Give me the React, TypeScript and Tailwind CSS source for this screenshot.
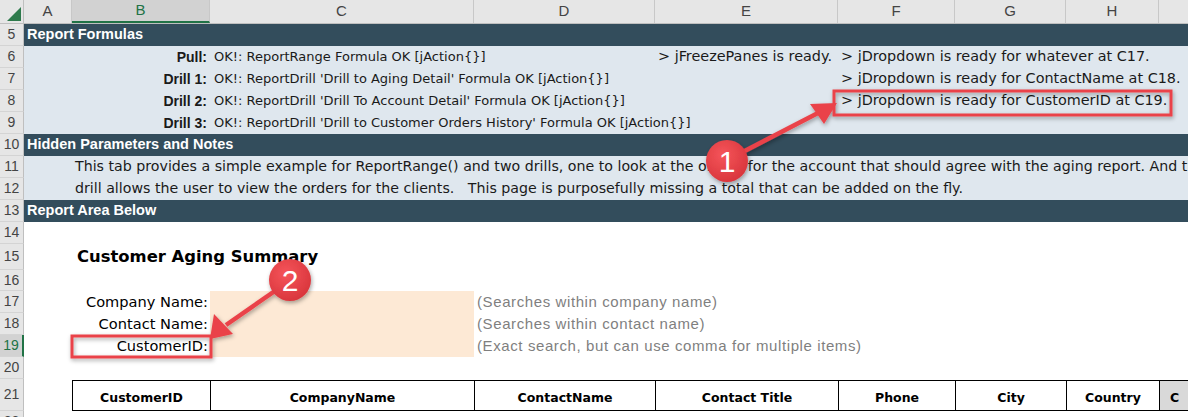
const columns = [
  { key: "A", width: "w-[48px]" },
  { key: "B", width: "w-[138px]", active: true },
  { key: "C", width: "w-[264px]" },
  { key: "D", width: "w-[181px]" },
  { key: "E", width: "w-[183px]" },
  { key: "F", width: "w-[117px]" },
  { key: "G", width: "w-[111px]" },
  { key: "H", width: "w-[93px]" },
];

const formulaRows = [
  {
    n: 6,
    label: "Pull:",
    text: "OK!: ReportRange Formula OK [jAction{}]",
    e: "> jFreezePanes is ready.",
    f: "> jDropdown is ready for whatever at C17.",
  },
  {
    n: 7,
    label: "Drill 1:",
    text: "OK!: ReportDrill 'Drill to Aging Detail' Formula OK [jAction{}]",
    e: "",
    f: "> jDropdown is ready for ContactName at C18.",
  },
  {
    n: 8,
    label: "Drill 2:",
    text: "OK!: ReportDrill 'Drill To Account Detail' Formula OK [jAction{}]",
    e: "",
    f: "> jDropdown is ready for CustomerID at C19.",
  },
  {
    n: 9,
    label: "Drill 3:",
    text: "OK!: ReportDrill 'Drill to Customer Orders History' Formula OK [jAction{}]",
    e: "",
    f: "",
  },
];

const filters = [
  { n: 17, label: "Company Name:", hint: "(Searches within company name)" },
  { n: 18, label: "Contact Name:", hint: "(Searches within contact name)" },
  { n: 19, label: "CustomerID:", hint: "(Exact search, but can use comma for multiple items)", active: true },
];

const tableHead = [
  { label: "CustomerID", width: "w-[138px]" },
  { label: "CompanyName", width: "w-[264px]" },
  { label: "ContactName", width: "w-[181px]" },
  { label: "Contact Title", width: "w-[183px]" },
  { label: "Phone", width: "w-[117px]" },
  { label: "City", width: "w-[111px]" },
  { label: "Country", width: "w-[93px]" },
];

function Row({
  n,
  h,
  band = "",
  active = false,
  children,
}: {
  n: number;
  h: string;
  band?: string;
  active?: boolean;
  children?: React.ReactNode;
}) {
  return (
    <div className={`flex ${h}`}>
      <div
        className={`flex w-[24px] shrink-0 items-center justify-center border-b border-[#d4d4d4] font-['Liberation_Sans',sans-serif] text-[14px] ${
          active
            ? "border-r-2 border-r-[#217346] bg-[#d2d2d2] text-[#217346]"
            : "border-r border-r-[#bfbfbf] bg-[#e6e6e6] text-[#444]"
        }`}
      >
        {n}
      </div>
      <div className={`flex min-w-0 flex-1 items-center whitespace-nowrap ${band}`}>{children}</div>
    </div>
  );
}

function Annotations() {
  return (
    <svg className="pointer-events-none absolute inset-0" width="1188" height="417">
      <defs>
        <filter id="sh" x="-30%" y="-30%" width="160%" height="160%">
          <feDropShadow dx="1" dy="2" stdDeviation="2" floodColor="#000" floodOpacity="0.35" />
        </filter>
        <radialGradient id="dot" cx="40%" cy="35%" r="70%">
          <stop offset="0%" stopColor="#f5555a" />
          <stop offset="100%" stopColor="#d8343b" />
        </radialGradient>
      </defs>
      <g filter="url(#sh)">
        <rect x="834" y="91" width="337" height="24" fill="none" stroke="#ea4349" strokeWidth="3" />
        <rect x="72" y="336" width="139" height="21" fill="none" stroke="#ea4349" strokeWidth="3" />
        <line x1="735" y1="156" x2="818" y2="113" stroke="#ea4349" strokeWidth="4.5" />
        <polygon points="837,103 810,104 824,124" fill="#ea4349" />
        <line x1="285" y1="284" x2="226" y2="325" stroke="#ea4349" strokeWidth="4.5" />
        <polygon points="210,339 214,314 233,334" fill="#ea4349" />
        <circle cx="727" cy="161" r="21" fill="url(#dot)" />
        <circle cx="290" cy="280" r="21" fill="url(#dot)" />
      </g>
      <text x="727" y="172" textAnchor="middle" fill="#fff" fontSize="30" fontFamily="Liberation Sans, sans-serif">
        1
      </text>
      <text x="290" y="291" textAnchor="middle" fill="#fff" fontSize="30" fontFamily="Liberation Sans, sans-serif">
        2
      </text>
    </svg>
  );
}

export default function App() {
  const dark = "bg-[#334d5c] text-white font-bold font-['Liberation_Sans',sans-serif] text-[14.5px]";
  const light = "bg-[#dfe7ee] text-[#1a1a1a]";
  return (
    <div className="relative h-[417px] w-[1188px] overflow-hidden bg-white font-['DejaVu_Sans',sans-serif] text-[13px] text-black">
      {/* column headers */}
      <div className="flex h-[24px] border-b border-[#bfbfbf] bg-[#e6e6e6] font-['Liberation_Sans',sans-serif] text-[15px] text-[#444]">
        <div className="flex w-[24px] shrink-0 items-end justify-end border-r border-[#bfbfbf] p-[2px]">
          <svg width="14" height="14" viewBox="0 0 14 14">
            <polygon points="14,0 14,14 0,14" fill="#2e7a4c" />
          </svg>
        </div>
        {columns.map((c) => (
          <div
            key={c.key}
            className={`flex shrink-0 items-center justify-center border-r border-[#c8c8c8] ${c.width} ${
              c.active ? "border-b-2 border-b-[#217346] bg-[#d2d2d2] text-[#217346]" : ""
            }`}
          >
            {c.key}
          </div>
        ))}
        <div className="flex-1" />
      </div>

      <Row n={5} h="h-[22px]" band={dark}>
        <span className="pl-[3px]">Report Formulas</span>
      </Row>
      {formulaRows.map((r) => (
        <Row key={r.n} n={r.n} h="h-[22px]" band={light}>
          <div className="w-[186px] shrink-0 pr-[3px] text-right font-['Liberation_Sans',sans-serif] text-[14px] font-bold">
            {r.label}
          </div>
          <div className="w-[445px] shrink-0 pl-[4px]">{r.text}</div>
          <div className="w-[183px] shrink-0 pl-[3px] text-[14.4px]">{r.e}</div>
          <div className="pl-[3px] text-[14.4px]">{r.f}</div>
        </Row>
      ))}
      <Row n={10} h="h-[22px]" band={dark}>
        <span className="pl-[3px]">Hidden Parameters and Notes</span>
      </Row>
      <Row n={11} h="h-[22px]" band={light}>
        <span className="pl-[51px] text-[14.2px]">
          This tab provides a simple example for ReportRange() and two drills, one to look at the orders for the account
          that should agree with the aging report. And the second
        </span>
      </Row>
      <Row n={12} h="h-[22px]" band={light}>
        <span className="pl-[51px] text-[14.2px]">
          drill allows the user to view the orders for the clients.&nbsp;&nbsp; This page is purposefully missing a total
          that can be added on the fly.
        </span>
      </Row>
      <Row n={13} h="h-[22px]" band={dark}>
        <span className="pl-[3px]">Report Area Below</span>
      </Row>
      <Row n={14} h="h-[22px]" />
      <Row n={15} h="h-[26px]">
        <span className="pl-[53px] text-[16.4px] font-bold">Customer Aging Summary</span>
      </Row>
      <Row n={16} h="h-[21px]" />
      {filters.map((f) => (
        <Row key={f.n} n={f.n} h="h-[22px]" active={f.active}>
          <div className="w-[186px] shrink-0 pr-[2px] text-right text-[14.6px]">{f.label}</div>
          <div className="h-full w-[264px] shrink-0 bg-[#fde9d5]" />
          <div className="pl-[3px] font-['Liberation_Sans',sans-serif] text-[15px] tracking-[0.6px] text-[#7f7f7f]">
            {f.hint}
          </div>
        </Row>
      ))}
      <Row n={20} h="h-[22px]" />
      <Row n={21} h="h-[32px]">
        <div className="ml-[48px] flex h-[31px] items-stretch border-y border-black">
          {tableHead.map((t) => (
            <div
              key={t.label}
              className={`flex shrink-0 items-end justify-center border-l border-black pb-[2px] text-[12.5px] font-bold ${t.width}`}
            >
              {t.label}
            </div>
          ))}
          <div className="flex w-[40px] items-end border-l border-black bg-[#d9d9d9] pb-[2px] pl-[10px] text-[12.5px] font-bold">
            C
          </div>
        </div>
      </Row>
      <Row n={22} h="h-[22px]" />

      <Annotations />
    </div>
  );
}
